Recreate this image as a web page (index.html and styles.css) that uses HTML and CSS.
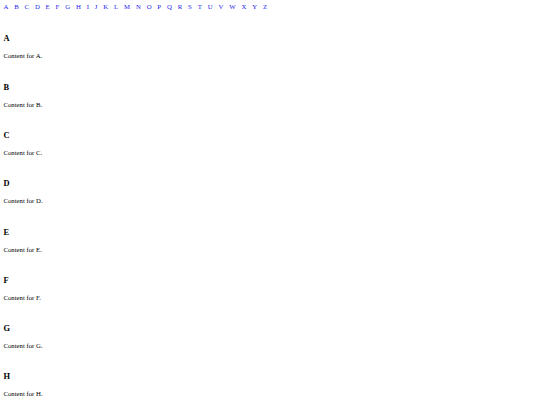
FILE: index.html
```html
<!DOCTYPE html>
<html lang="en">
<head>
    <meta charset="UTF-8">
    <meta name="viewport" content="width=device-width, initial-scale=1.0">
    <title>A-Z Index</title>
    <link rel="stylesheet" href="styles.css">
</head>
<body>
    <nav class="letters">
        <a href="#A">A</a><a href="#B">B</a><a href="#C">C</a><a href="#D">D</a><a href="#E">E</a><a href="#F">F</a><a href="#G">G</a><a href="#H">H</a><a href="#I">I</a><a href="#J">J</a><a href="#K">K</a><a href="#L">L</a><a href="#M">M</a><a href="#N">N</a><a href="#O">O</a><a href="#P">P</a><a href="#Q">Q</a><a href="#R">R</a><a href="#S">S</a><a href="#T">T</a><a href="#U">U</a><a href="#V">V</a><a href="#W">W</a><a href="#X">X</a><a href="#Y">Y</a><a href="#Z">Z</a>
    </nav>
    <div class="section" id="A"><h2>A</h2><p>Content for A.</p></div>
    <div class="section" id="B"><h2>B</h2><p>Content for B.</p></div>
    <div class="section" id="C"><h2>C</h2><p>Content for C.</p></div>
    <div class="section" id="D"><h2>D</h2><p>Content for D.</p></div>
    <div class="section" id="E"><h2>E</h2><p>Content for E.</p></div>
    <div class="section" id="F"><h2>F</h2><p>Content for F.</p></div>
    <div class="section" id="G"><h2>G</h2><p>Content for G.</p></div>
    <div class="section" id="H"><h2>H</h2><p>Content for H.</p></div>
    <div class="section" id="I"><h2>I</h2><p>Content for I.</p></div>
    <div class="section" id="J"><h2>J</h2><p>Content for J.</p></div>
    <div class="section" id="K"><h2>K</h2><p>Content for K.</p></div>
    <div class="section" id="L"><h2>L</h2><p>Content for L.</p></div>
    <div class="section" id="M"><h2>M</h2><p>Content for M.</p></div>
    <div class="section" id="N"><h2>N</h2><p>Content for N.</p></div>
    <div class="section" id="O"><h2>O</h2><p>Content for O.</p></div>
    <div class="section" id="P"><h2>P</h2><p>Content for P.</p></div>
    <div class="section" id="Q"><h2>Q</h2><p>Content for Q.</p></div>
    <div class="section" id="R"><h2>R</h2><p>Content for R.</p></div>
    <div class="section" id="S"><h2>S</h2><p>Content for S.</p></div>
    <div class="section" id="T"><h2>T</h2><p>Content for T.</p></div>
    <div class="section" id="U"><h2>U</h2><p>Content for U.</p></div>
    <div class="section" id="V"><h2>V</h2><p>Content for V.</p></div>
    <div class="section" id="W"><h2>W</h2><p>Content for W.</p></div>
    <div class="section" id="X"><h2>X</h2><p>Content for X.</p></div>
    <div class="section" id="Y"><h2>Y</h2><p>Content for Y.</p></div>
    <div class="section" id="Z"><h2>Z</h2><p>Content for Z.</p></div>
</body>
</html>
```

FILE: styles.css
```css
body {
    font-family: "Liberation Serif", "Times New Roman", serif;
    font-size: 6.75px;
    color: #000;
    margin: 3.4px;
}
.letters {
    display: flex;
    gap: 5.87px;
    padding-bottom: 1.8px;
}
.letters a { color: #2222ee; text-decoration: none; }
.section { margin-top: 22.2px; }
h2 {
    font-size: 8.4px;
    line-height: 10px;
    margin: 0 0 8.1px;
}
p { line-height: 8px; margin: 0; }
```
